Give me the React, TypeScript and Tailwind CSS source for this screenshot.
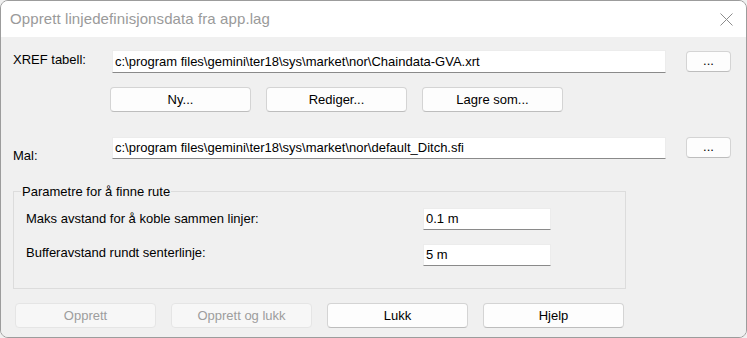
import React from "react";

const font = { fontFamily: '"Liberation Sans", Arial, sans-serif' };

const TextBox = ({ value, className }: { value: string; className: string }) => (
	<div
		className={
			"bg-white border border-[#ececec] border-b-[#8a8a8a] text-[13px] text-black flex items-center pl-[2px] whitespace-nowrap overflow-hidden " +
			className
		}
	>
		{value}
	</div>
);

const Button = ({
	label,
	className,
	disabled = false,
}: {
	label: string;
	className: string;
	disabled?: boolean;
}) => (
	<button
		className={
			disabled
				? "rounded-[4px] border border-[#e5e5e5] bg-[#f7f7f7] text-[13px] text-[#9d9d9d] flex items-center justify-center " + className
				: "rounded-[4px] border border-[#d4d4d4] border-b-[#bdbdbd] bg-[#fdfdfd] text-[13px] text-black flex items-center justify-center " + className
		}
	>
		{label}
	</button>
);

export default function App() {
	return (
		<div style={font} className="w-[747px] h-[338px] bg-[#f0f0f0]">
			<div className="w-[747px] h-[338px] border border-[#9c9c9c] rounded-[8px] overflow-hidden flex flex-col">
				{/* title bar */}
				<div className="h-[36px] bg-white flex items-center justify-between pl-[9px] pr-[13px] shrink-0">
					<span className="text-[15px] text-[#9a9a9a] pt-[1px] tracking-[0.1px]">
						Opprett linjedefinisjonsdata fra app.lag
					</span>
					<svg width="13" height="13" viewBox="0 0 13 13" className="mt-[1px]">
						<path d="M0.5 0.5 L12.5 12.5 M12.5 0.5 L0.5 12.5" stroke="#8c8c8c" strokeWidth="1" />
					</svg>
				</div>

				<div className="flex-1 bg-[#f0f0f0] flex flex-col">
					{/* XREF */}
					<div className="flex items-start h-[23px] mt-[13px] pl-[12px]">
						<span className="w-[99px] text-[13px] pt-[2px] leading-[15px]">XREF tabell:</span>
						<TextBox
							value="c:\program files\gemini\ter18\sys\market\nor\Chaindata-GVA.xrt"
							className="w-[554px] h-[23px]"
						/>
						<Button label="..." className="w-[45px] h-[21px] ml-[20px] mt-[1px] leading-[10px] pb-[2px]" />
					</div>

					<div className="flex gap-[15px] mt-[14px] pl-[109px]">
						<Button label="Ny..." className="w-[141px] h-[25px]" />
						<Button label="Rediger..." className="w-[141px] h-[25px]" />
						<Button label="Lagre som..." className="w-[141px] h-[25px]" />
					</div>

					{/* Mal */}
					<div className="flex items-start h-[22px] mt-[25px] pl-[12px]">
						<span className="w-[99px] text-[13px] pt-[11px] leading-[15px]">Mal:</span>
						<TextBox
							value="c:\program files\gemini\ter18\sys\market\nor\default_Ditch.sfi"
							className="w-[554px] h-[22px]"
						/>
						<Button label="..." className="w-[45px] h-[21px] ml-[20px] leading-[10px] pb-[2px]" />
					</div>

					{/* group box */}
					<div className="relative ml-[12px] mt-[32px] w-[613px] h-[98px] border border-[#dcdcdc] pl-[12px] pt-[16px]">
						<span className="absolute -top-[8px] left-[7px] bg-[#f0f0f0] px-[1px] text-[13px] leading-[15px]">
							Parametre for å finne rute
						</span>
						<div className="flex items-center">
							<span className="w-[397px] text-[13px]">Maks avstand for å koble sammen linjer:</span>
							<TextBox value="0.1 m" className="w-[128px] h-[22px]" />
						</div>
						<div className="flex items-center mt-[14px]">
							<span className="w-[397px] text-[13px] -mt-[5px]">Bufferavstand rundt senterlinje:</span>
							<TextBox value="5 m" className="w-[128px] h-[22px]" />
						</div>
					</div>

					<div className="flex gap-[15px] mt-[14px] pl-[14px]">
						<Button label="Opprett" disabled className="w-[141px] h-[25px]" />
						<Button label="Opprett og lukk" disabled className="w-[141px] h-[25px]" />
						<Button label="Lukk" className="w-[141px] h-[25px]" />
						<Button label="Hjelp" className="w-[141px] h-[25px]" />
					</div>
				</div>
			</div>
		</div>
	);
}
